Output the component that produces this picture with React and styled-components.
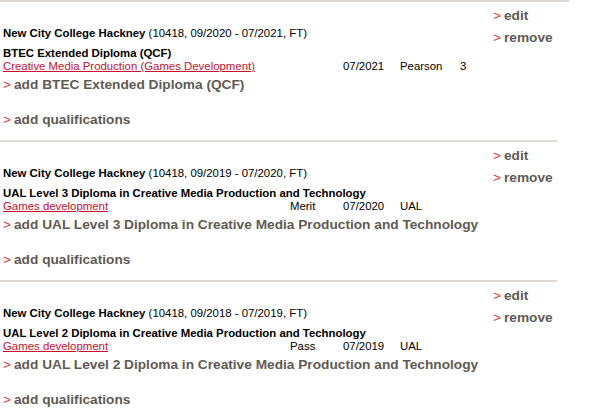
import React from "react";
import styled, { createGlobalStyle } from "styled-components";

const GlobalStyle = createGlobalStyle`
  body {
    margin: 0;
    background: #fff;
    font-family: "Liberation Sans", Arial, sans-serif;
    color: #000;
  }
`;

const Page = styled.div`
  width: 600px;
`;

const Section = styled.section`
  display: flex;
  width: ${(p) => (p.wide ? "566px" : "554px")};
  height: 138px;
  border-top: 2px solid #dcd9d5;
  padding-left: 3px;
  box-sizing: content-box;
`;

const Main = styled.div`
  width: 490px;
  padding-top: 24px;
`;

const Actions = styled.div`
  display: flex;
  flex-direction: column;
  gap: 6px;
  padding-top: 6px;
`;

const Header = styled.div`
  font-size: 11.4px;
  line-height: 14px;
  b {
    font-weight: bold;
  }
`;

const QualTitle = styled.div`
  margin-top: 7px;
  font-size: 11.4px;
  font-weight: bold;
  line-height: 13px;
`;

const QualRow = styled.div`
  display: grid;
  grid-template-columns: 287px 53px 57px 60px 1fr;
  font-size: 11.4px;
  line-height: 13px;
`;

const Subject = styled.a`
  color: #c8102e;
  text-decoration: underline;
`;

const ActionLink = styled.a`
  display: block;
  font-size: 13.7px;
  font-weight: bold;
  line-height: 16px;
  color: #5f5a54;
  text-decoration: none;
  margin-top: ${(p) => p.gap || 0}px;
  &::before {
    content: ">";
    color: #e0393e;
    font-weight: normal;
    margin-right: 3px;
  }
`;

const records = [
  {
    wide: true,
    years: "09/2020 - 07/2021",
    title: "BTEC Extended Diploma (QCF)",
    subject: "Creative Media Production (Games Development)",
    grade: "",
    date: "07/2021",
    body: "Pearson",
    level: "3",
  },
  {
    years: "09/2019 - 07/2020",
    title: "UAL Level 3 Diploma in Creative Media Production and Technology",
    subject: "Games development",
    grade: "Merit",
    date: "07/2020",
    body: "UAL",
    level: "",
  },
  {
    years: "09/2018 - 07/2019",
    title: "UAL Level 2 Diploma in Creative Media Production and Technology",
    subject: "Games development",
    grade: "Pass",
    date: "07/2019",
    body: "UAL",
    level: "",
  },
];

const App = () => {
  return (
    <Page>
      <GlobalStyle />
      {records.map((r, i) => (
        <Section key={i} wide={r.wide}>
          <Main>
            <Header>
              <b>New City College Hackney</b> (10418, {r.years}, FT)
            </Header>
            <QualTitle>{r.title}</QualTitle>
            <QualRow>
              <div>
                <Subject href="#">{r.subject}</Subject>
              </div>
              <div>{r.grade}</div>
              <div>{r.date}</div>
              <div>{r.body}</div>
              <div>{r.level}</div>
            </QualRow>
            <ActionLink href="#" gap={4}>
              add {r.title}
            </ActionLink>
            <ActionLink href="#" gap={19}>
              add qualifications
            </ActionLink>
          </Main>
          <Actions>
            <ActionLink href="#">edit</ActionLink>
            <ActionLink href="#">remove</ActionLink>
          </Actions>
        </Section>
      ))}
    </Page>
  );
};

export default App;
